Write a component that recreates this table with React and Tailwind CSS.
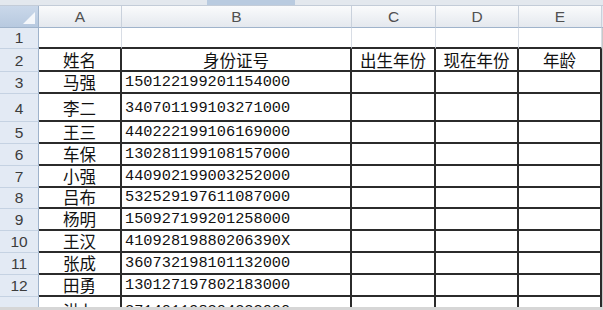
const COLS = ['A', 'B', 'C', 'D', 'E']

const rows = [
  { n: 1, h: 'h-[21px]', pb: 'pb-[1px]', cells: ['', '', '', '', ''], blank: true },
  { n: 2, h: 'h-[23px]', pb: 'pb-[1px]', cells: ['姓名', '身份证号', '出生年份', '现在年份', '年龄'], head: true },
  { n: 3, h: 'h-[22px]', pb: 'pb-[1px]', cells: ['马强', '150122199201154000', '', '', ''] },
  { n: 4, h: 'h-[28px]', pb: 'pb-[3px]', cells: ['李二', '340701199103271000', '', '', ''] },
  { n: 5, h: 'h-[22px]', pb: 'pb-[1px]', cells: ['王三', '440222199106169000', '', '', ''] },
  { n: 6, h: 'h-[22px]', pb: 'pb-[1px]', cells: ['车保', '130281199108157000', '', '', ''] },
  { n: 7, h: 'h-[22px]', pb: 'pb-[1px]', cells: ['小强', '440902199003252000', '', '', ''] },
  { n: 8, h: 'h-[21px]', pb: 'pb-[1px]', cells: ['吕布', '532529197611087000', '', '', ''] },
  { n: 9, h: 'h-[22px]', pb: 'pb-[1px]', cells: ['杨明', '150927199201258000', '', '', ''] },
  { n: 10, h: 'h-[22px]', pb: 'pb-[1px]', cells: ['王汉', '41092819880206390X', '', '', ''] },
  { n: 11, h: 'h-[22px]', pb: 'pb-[1px]', cells: ['张成', '360732198101132000', '', '', ''] },
  { n: 12, h: 'h-[22px]', pb: 'pb-[1px]', cells: ['田勇', '130127197802183000', '', '', ''] },
  // only the top of this row shows at the bottom edge
  { n: 13, h: 'h-[26px]', pb: 'pb-[1px]', cells: ['洪七', '371401198304233000', '', '', ''] },
]

const cjk = "font-['Noto_Sans_CJK_SC',sans-serif]"
const sans = "font-['Liberation_Sans','DejaVu_Sans',sans-serif]"

function Cell({ row, col, value }) {
  const border = row.blank
    ? 'border-b-2 border-b-[#2b2b2b] border-r border-r-[#d8dde5]'
    : 'border-b-2 border-b-[#2b2b2b] border-r-2 border-r-[#2b2b2b]'
  if (col === 1 && !row.head) {
    return (
      <div className={`${row.h} ${row.pb} ${border} flex items-end pl-[3px] whitespace-nowrap font-['Liberation_Mono',monospace] text-[15.3px] leading-[18px] text-[#111]`}>
        {value}
      </div>
    )
  }
  return (
    <div className={`${row.h} ${row.pb} ${border} flex items-end justify-center whitespace-nowrap ${cjk} text-[16.5px] leading-[18px] text-[#111]`}>
      {value}
    </div>
  )
}

export default function App() {
  return (
    <div className="w-[603px] h-[310px] bg-white overflow-hidden">
      {/* strip left over from the ribbon above */}
      <div className="h-[6px] flex bg-[#e3e8ee] border-b border-[#c3ccd8]">
        <div className="w-[207px]" />
        <div className="w-[88px] bg-[#b9cbe0]" />
      </div>

      <div className="h-[301px] overflow-hidden">
        <div className="grid grid-cols-[39px_83px_230px_84px_83px_83px_1px]">
          {/* corner */}
          <div className="h-[22px] relative bg-gradient-to-b from-[#cad8ea] to-[#b7c9df] border-r border-b border-[#9fb3cb]">
            <svg className="absolute right-[3px] bottom-[3px]" width="12" height="12" viewBox="0 0 12 12">
              <polygon points="12,0 12,12 0,12" fill="#f4f7fb" />
            </svg>
          </div>
          {COLS.map(c => (
            <div
              key={c}
              className={`h-[22px] flex items-center justify-center bg-gradient-to-b from-[#fafbfc] to-[#e4e8ee] border-r border-[#c9d1dc] border-b border-b-[#9fb3cb] ${sans} text-[15.5px] text-[#505050]`}
            >
              {c}
            </div>
          ))}
          <div className="h-[22px] bg-[#e4e8ee] border-b border-b-[#9fb3cb]" />

          {rows.map(row => (
            <div key={row.n} className="contents">
              <div className={`${row.h} ${row.pb} flex items-end justify-center bg-[#e3eaf4] border-r border-r-[#9fb3cb] border-b border-b-[#c5d2e2] ${sans} text-[15.5px] leading-[19px] text-[#3c3c3c]`}>
                {row.n}
              </div>
              {row.cells.map((v, i) => (
                <Cell key={i} row={row} col={i} value={v} />
              ))}
              <div className={`${row.h} bg-[#c8c8c8]`} />
            </div>
          ))}
        </div>
      </div>

      <div className="h-[3px] bg-[#d6d6d6]" />
    </div>
  )
}
